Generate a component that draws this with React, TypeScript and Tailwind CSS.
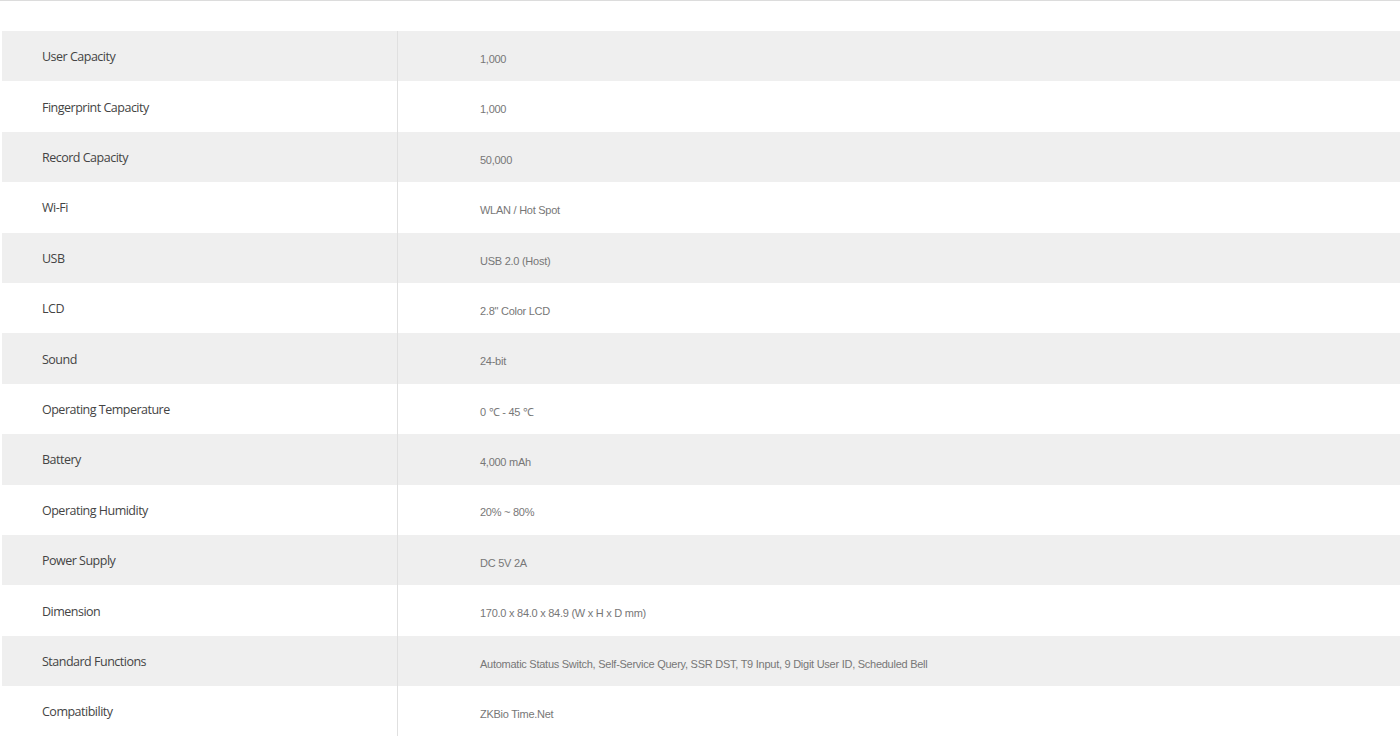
const specs: [string, string][] = [
  ["User Capacity", "1,000"],
  ["Fingerprint Capacity", "1,000"],
  ["Record Capacity", "50,000"],
  ["Wi-Fi", "WLAN / Hot Spot"],
  ["USB", "USB 2.0 (Host)"],
  ["LCD", "2.8\" Color LCD"],
  ["Sound", "24-bit"],
  ["Operating Temperature", "0 \u2103 - 45 \u2103"],
  ["Battery", "4,000 mAh"],
  ["Operating Humidity", "20% ~ 80%"],
  ["Power Supply", "DC 5V 2A"],
  ["Dimension", "170.0 x 84.0 x 84.9 (W x H x D mm)"],
  ["Standard Functions", "Automatic Status Switch, Self-Service Query, SSR DST, T9 Input, 9 Digit User ID, Scheduled Bell"],
  ["Compatibility", "ZKBio Time.Net"],
];

export default function App() {
  return (
    <div className="min-h-screen bg-white overflow-hidden">
      <div className="h-px bg-[#dcdcdc]" />
      <div className="pt-[30px] pl-[2px]">
        {specs.map(([label, value], i) => (
          <div
            key={label}
            className={`flex h-[50.4px] ${i % 2 === 0 ? "bg-[#efefef]" : "bg-white"}`}
          >
            <div className="w-[396px] shrink-0 flex items-center pl-[40px] pt-[3px] border-r border-[#e0e0e0] text-[12.5px] tracking-[-0.5px] text-[#444] font-['Open_Sans',sans-serif]">
              {label}
            </div>
            <div className="flex-1 flex items-center pl-[82px] pt-[6px] text-[11px] tracking-[-0.26px] text-[#777] font-['Liberation_Sans',sans-serif]">
              {value}
            </div>
          </div>
        ))}
      </div>
    </div>
  );
}
